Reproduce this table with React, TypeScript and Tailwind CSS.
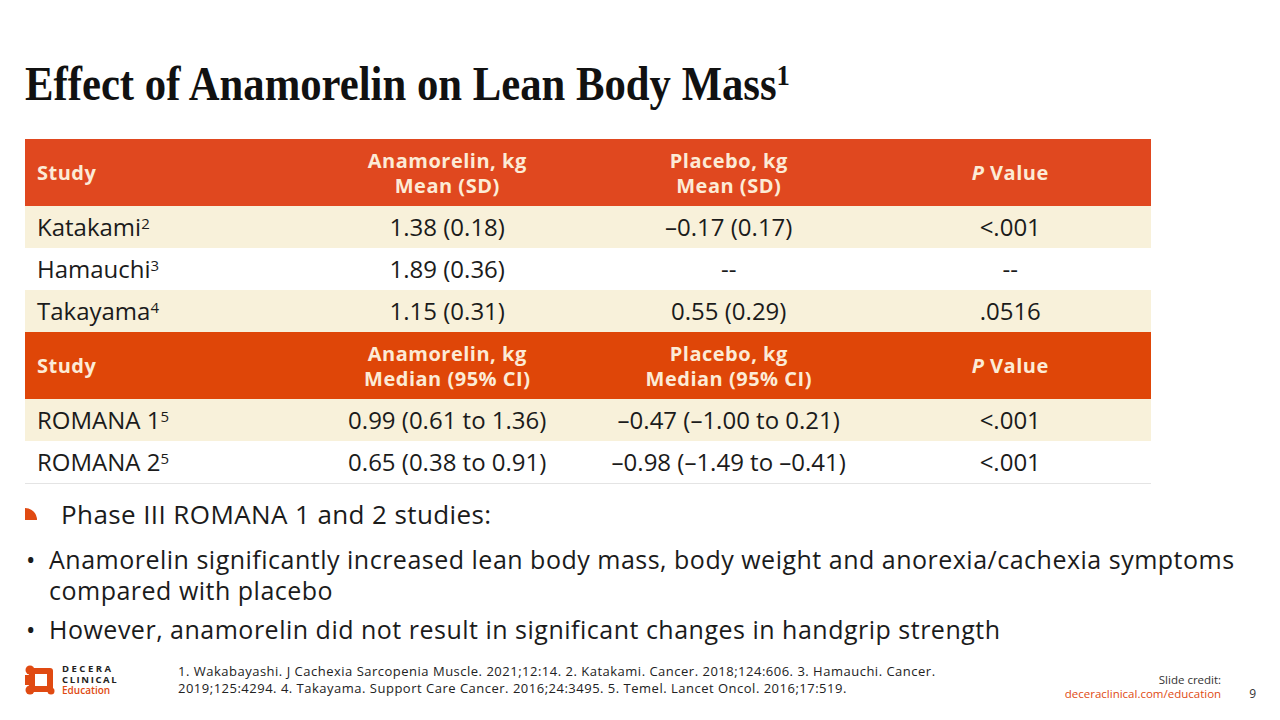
import React from "react";

const body = "font-['Open_Sans','Noto_Sans',sans-serif]";

type Row = { study: string; sup: string; a: string; b: string; p: string; shade: boolean };

const top: Row[] = [
  { study: "Katakami", sup: "2", a: "1.38 (0.18)", b: "\u20130.17 (0.17)", p: "<.001", shade: true },
  { study: "Hamauchi", sup: "3", a: "1.89 (0.36)", b: "--", p: "--", shade: false },
  { study: "Takayama", sup: "4", a: "1.15 (0.31)", b: "0.55 (0.29)", p: ".0516", shade: true },
];

const bottom: Row[] = [
  { study: "ROMANA 1", sup: "5", a: "0.99 (0.61 to 1.36)", b: "\u20130.47 (\u20131.00 to 0.21)", p: "<.001", shade: true },
  { study: "ROMANA 2", sup: "5", a: "0.65 (0.38 to 0.91)", b: "\u20130.98 (\u20131.49 to \u20130.41)", p: "<.001", shade: false },
];

function Header({ a, b, bg }: { a: [string, string]; b: [string, string]; bg: string }) {
  return (
    <div className={`grid grid-cols-4 h-[67px] items-center text-[#FCEBD6] font-bold text-[20px] tracking-[0.5px] leading-[25px] ${bg}`}>
      <div className="pl-3">Study</div>
      <div className="text-center">
        {a[0]}
        <br />
        {a[1]}
      </div>
      <div className="text-center">
        {b[0]}
        <br />
        {b[1]}
      </div>
      <div className="text-center">
        <i>P</i> Value
      </div>
    </div>
  );
}

function DataRow({ r }: { r: Row }) {
  return (
    <div className={`grid grid-cols-4 h-[42px] items-center text-[24px] text-[#1b1b1b] ${r.shade ? "bg-[#F8F1DA]" : "bg-white"}`}>
      <div className="pl-3">
        {r.study}
        <sup className="text-[15px]">{r.sup}</sup>
      </div>
      <div className="text-center">{r.a}</div>
      <div className="text-center">{r.b}</div>
      <div className="text-center">{r.p}</div>
    </div>
  );
}

function Logo() {
  return (
    <svg width="30" height="30" viewBox="0 0 30 30">
      <rect x="4" y="3" width="24" height="24" rx="3" fill="#E04A12" />
      <rect x="10" y="9" width="12" height="12" fill="white" />
      <circle cx="5" cy="5" r="4.5" fill="#E04A12" />
      <circle cx="5" cy="25" r="4.5" fill="#E04A12" />
      <circle cx="26" cy="26" r="3.5" fill="#E04A12" />
      <rect x="0" y="10" width="4" height="10" fill="#E04A12" />
    </svg>
  );
}

export default function App() {
  return (
    <div className={`w-[1280px] h-[720px] bg-white flex flex-col overflow-hidden ${body}`}>
      <div className="h-[139px] pl-[25px] pt-[60px]">
        <h1 className="inline-block origin-left scale-x-[0.89] whitespace-nowrap font-['Liberation_Serif',serif] font-bold text-[48px] leading-none text-[#111]">
          Effect of Anamorelin on Lean Body Mass
          <sup className="text-[30px]">1</sup>
        </h1>
      </div>

      <div className="ml-[25px] w-[1126px] border-b border-[#e4e4e4]">
        <Header a={["Anamorelin, kg", "Mean (SD)"]} b={["Placebo, kg", "Mean (SD)"]} bg="bg-[#E0481F]" />
        {top.map((r) => (
          <DataRow key={r.study} r={r} />
        ))}
        <Header a={["Anamorelin, kg", "Median (95% CI)"]} b={["Placebo, kg", "Median (95% CI)"]} bg="bg-[#DF4608]" />
        {bottom.map((r) => (
          <DataRow key={r.study} r={r} />
        ))}
      </div>

      <div className="pl-[25px] pt-[12px] text-[#1b1b1b]">
        <div className="flex items-center h-[36px]">
          <span className="w-[12px] h-[12px] bg-[#E04A12] rounded-tr-[12px]" />
          <span className="ml-[24px] text-[26px] tracking-[0.4px]">Phase III ROMANA 1 and 2 studies:</span>
        </div>
        <ul className="mt-[12px] text-[25px] tracking-[0.5px] leading-[31px]">
          <li className="flex">
            <span className="w-[24px] pl-[1px]">•</span>
            <span>
              Anamorelin significantly increased lean body mass, body weight and anorexia/cachexia symptoms
              <br />
              compared with placebo
            </span>
          </li>
          <li className="flex mt-[8px]">
            <span className="w-[24px] pl-[1px]">•</span>
            <span>However, anamorelin did not result in significant changes in handgrip strength</span>
          </li>
        </ul>
      </div>

      <div className="mt-auto mb-[20px] flex items-center pl-[25px] pr-[24px]">
        <div className="flex items-center gap-[7px] w-[153px]">
          <Logo />
          <div className="flex flex-col gap-[1px]">
            <div className="text-[9.5px] leading-[9.5px] font-bold tracking-[2.5px] text-[#222]">DECERA</div>
            <div className="text-[9.5px] leading-[9.5px] font-bold tracking-[1.6px] text-[#222]">CLINICAL</div>
            <div className="text-[10px] leading-[10px] font-semibold text-[#E04A12]">Education</div>
          </div>
        </div>
        <div className="text-[13px] tracking-[0.5px] leading-[17px] text-[#222] w-[800px] whitespace-nowrap">
          1. Wakabayashi. J Cachexia Sarcopenia Muscle. 2021;12:14. 2. Katakami. Cancer. 2018;124:606. 3. Hamauchi. Cancer.
          <br />
          2019;125:4294. 4. Takayama. Support Care Cancer. 2016;24:3495. 5. Temel. Lancet Oncol. 2016;17:519.
        </div>
        <div className="ml-auto flex items-end gap-[28px] pt-[14px]">
          <div className="text-right text-[11.5px] leading-[14px] flex flex-col gap-[1px]">
            <div className="text-[#333] leading-[13px]">Slide credit:</div>
            <div className="text-[#E04A12] leading-[13px]">deceraclinical.com/education</div>
          </div>
          <div className="text-[12px] leading-[13px] text-[#333]">9</div>
        </div>
      </div>
    </div>
  );
}
